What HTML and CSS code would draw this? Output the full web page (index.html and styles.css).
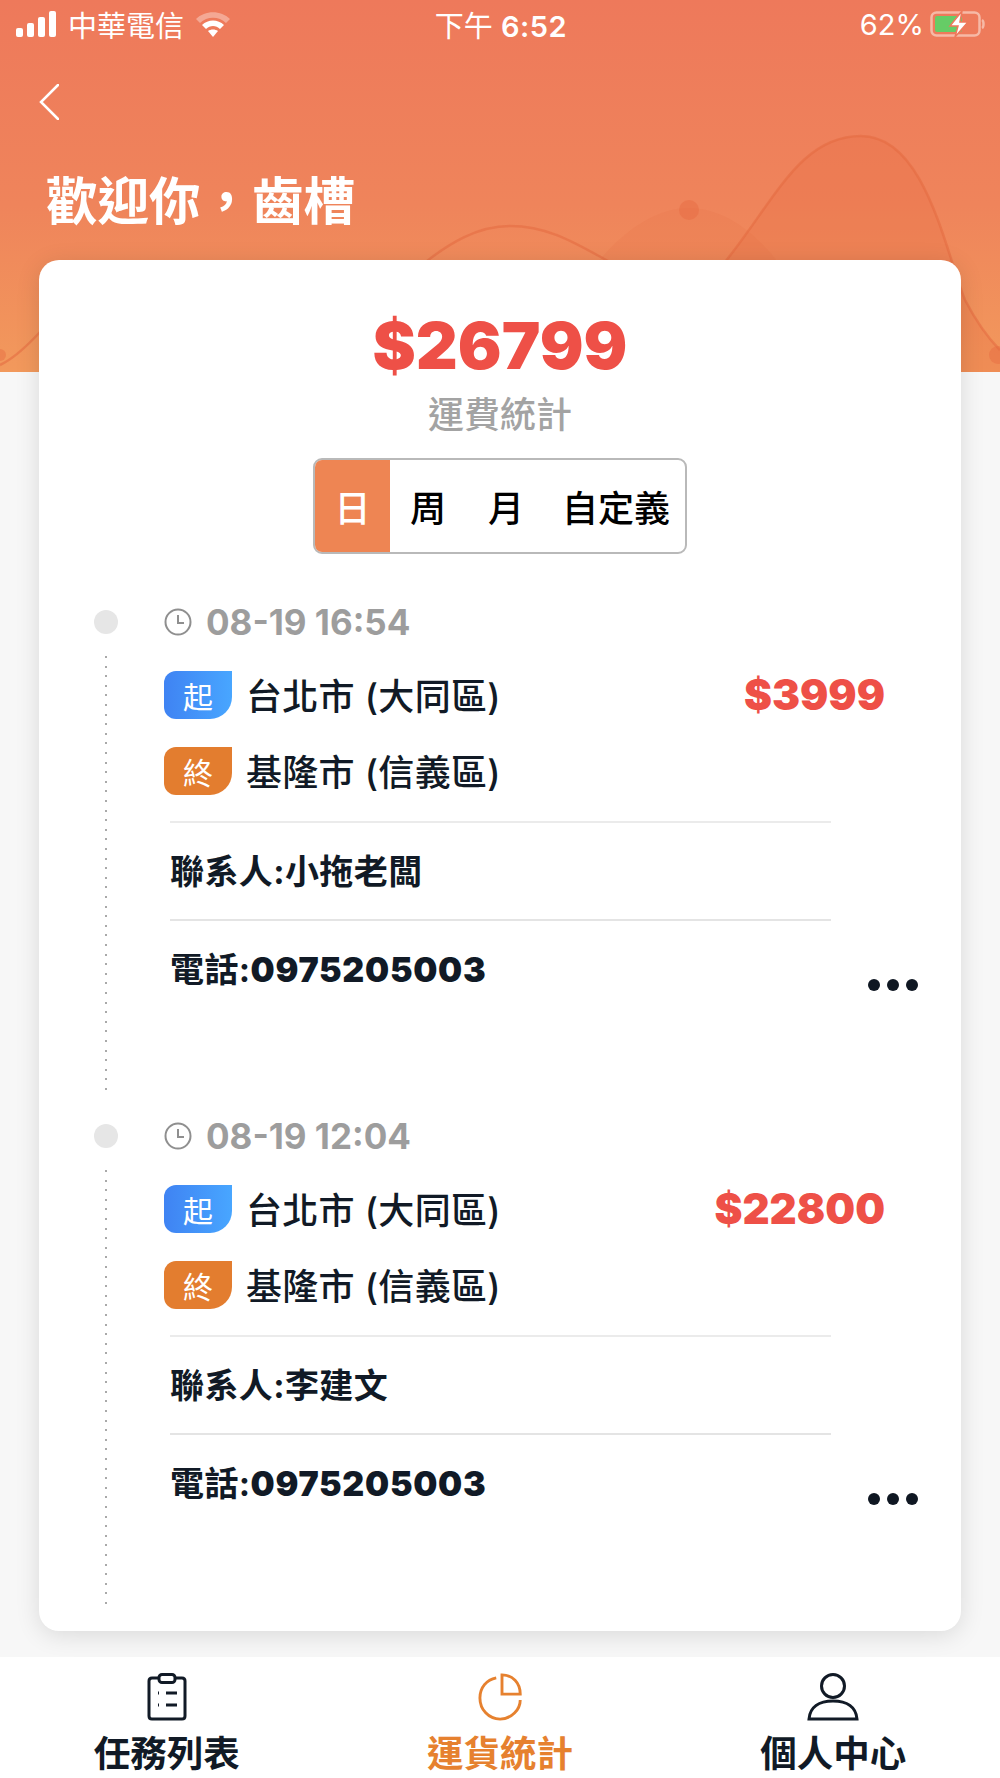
FILE: index.html
```html
<!DOCTYPE html>
<html lang="zh-Hant">
<head>
  <meta charset="UTF-8">
  <title>運貨統計</title>
  <meta name="viewport" content="width=device-width, initial-scale=1.0"/>
  <link rel="stylesheet" href="styles.css">
</head>
<body>

<header class="header">
  <svg class="hills" viewBox="0 0 1000 372" preserveAspectRatio="none" aria-hidden="true">
    <path class="hill-fill" d="M725 262C775 200 800 136 861 136C925 136 945 250 965 300C978 325 990 340 1000 350V372H725Z"/>
    <path class="hill-soft" d="M590 272C620 232 655 208 689 208C725 208 760 235 785 272V372H590Z"/>
    <circle class="hill-dot" cx="689" cy="210" r="10"/>
    <circle class="hill-dot" cx="998" cy="355" r="9"/>
    <circle class="hill-dot" cx="0" cy="355" r="6"/>
    <path class="hill-line" d="M0 365C15 358 28 345 40 332M410 275C450 240 480 226 510 226C555 226 585 250 625 270"/>
    <path class="hill-line" d="M725 262C775 200 800 136 861 136C925 136 945 250 965 300C978 325 990 340 1000 350"/>
  </svg>

  <div class="status-bar">
    <div class="status-left">
      <svg class="signal" viewBox="0 0 41 26"><rect x="0" y="17" width="7" height="9" rx="2"/><rect x="11" y="12" width="7" height="14" rx="2"/><rect x="22" y="6" width="7" height="20" rx="2"/><rect x="33" y="0" width="7" height="26" rx="2"/></svg>
      <span>中華電信</span>
      <svg class="wifi" viewBox="0 0 36 26"><path class="wifi-off" d="M1 8C10 -1 26 -1 35 8L31 12C24 5 12 5 5 12Z"/><path d="M7 14C13 8 23 8 29 14L25 18C21 14 15 14 11 18Z"/><path d="M13 20C16 18 20 18 23 20L18 26Z"/></svg>
    </div>
    <div class="status-time">下午 <b>6:52</b></div>
    <div class="status-right">
      <span>62%</span>
      <svg class="battery" viewBox="0 0 56 28"><rect class="battery-box" x="1.5" y="2.5" width="48" height="23" rx="5"/><path class="battery-box" d="M52 10C54 11 54 17 52 18"/><rect class="battery-level" x="5" y="6" width="27" height="16" rx="2"/><path class="battery-bolt" d="M32 1L20 16H28L25 27L38 12H30Z"/></svg>
    </div>
  </div>

  <a class="back" href="#">
    <svg viewBox="0 0 20 36"><path d="M19 1L2 18L19 35"/></svg>
  </a>
  <h1 class="welcome">歡迎你，齒槽</h1>
</header>

<main class="main">
  <section class="card">
    <div class="total">$26799</div>
    <div class="total-label">運費統計</div>
    <div class="tabs">
      <span class="tab active">日</span>
      <span class="tab">周</span>
      <span class="tab">月</span>
      <span class="tab">自定義</span>
    </div>

    <div class="timeline">
      <article class="item">
        <div class="rail"><span class="dot"></span><span class="dash"></span></div>
        <div class="content">
          <div class="date">
            <svg class="clock" viewBox="0 0 28 28"><circle cx="14" cy="14" r="12.5"/><path d="M14 7V15H20"/></svg>
            08-19 16:54
          </div>
          <div class="route">
            <span class="badge from">起</span>
            <span class="city">台北市 (大同區)</span>
            <span class="price">$3999</span>
          </div>
          <div class="route">
            <span class="badge to">終</span>
            <span class="city">基隆市 (信義區)</span>
          </div>
          <div class="info first">聯系人:小拖老闆</div>
          <div class="info-last">
            <div class="info">電話:<b>0975205003</b></div>
            <div class="more"><i></i><i></i><i></i></div>
          </div>
        </div>
      </article>

      <article class="item">
        <div class="rail"><span class="dot"></span><span class="dash"></span></div>
        <div class="content">
          <div class="date">
            <svg class="clock" viewBox="0 0 28 28"><circle cx="14" cy="14" r="12.5"/><path d="M14 7V15H20"/></svg>
            08-19 12:04
          </div>
          <div class="route">
            <span class="badge from">起</span>
            <span class="city">台北市 (大同區)</span>
            <span class="price">$22800</span>
          </div>
          <div class="route">
            <span class="badge to">終</span>
            <span class="city">基隆市 (信義區)</span>
          </div>
          <div class="info first">聯系人:李建文</div>
          <div class="info-last">
            <div class="info">電話:<b>0975205003</b></div>
            <div class="more"><i></i><i></i><i></i></div>
          </div>
        </div>
      </article>
    </div>
  </section>
</main>

<nav class="tabbar">
  <a class="tabbar-item" href="#">
    <svg viewBox="0 0 40 48"><path d="M11 5H5C3 5 2 6 2 8V43C2 45 3 46 5 46H35C37 46 38 45 38 43V8C38 6 37 5 35 5H29"/><rect x="12" y="1.5" width="16" height="8" rx="3"/><path d="M11 20H12M19 20H30M11 32H12M19 32H30"/></svg>
    <span>任務列表</span>
  </a>
  <a class="tabbar-item active" href="#">
    <svg viewBox="0 0 46 50"><path d="M19 5C9 7 2 15 2 26C2 38 11 48 23 48C35 48 44 38 44 28"/><path d="M25 2C36 2 44 10 44 22H25Z"/></svg>
    <span>運貨統計</span>
  </a>
  <a class="tabbar-item" href="#">
    <svg viewBox="0 0 52 48"><ellipse cx="26" cy="13" rx="11.5" ry="11.5"/><path d="M2 46C3 34 12 28 26 28C40 28 49 34 50 46Z"/></svg>
    <span>個人中心</span>
  </a>
</nav>

</body>
</html>
```

FILE: styles.css
```css
* {
  box-sizing: border-box;
}

html, body {
  margin: 0;
  height: 1778px;
  overflow: hidden;
}

body {
  font-family: Inter, "Noto Sans CJK TC", sans-serif;
  background: #f7f7f7;
  color: #111a26;
}

.header {
  position: relative;
  height: 372px;
  padding-top: 3px;
  background: linear-gradient(180deg, #ee795b 0%, #ef845b 55%, #f2995c 100%);
  color: white;
  overflow: hidden;
}

.hills {
  position: absolute;
  left: 0;
  top: 0;
  width: 100%;
  height: 100%;
}

.hill-fill {
  fill: #e5673f;
  opacity: 0.24;
}

.hill-soft {
  fill: #e5673f;
  opacity: 0.14;
}

.hill-dot {
  fill: #e5673f;
  opacity: 0.4;
}

.hill-line {
  fill: none;
  stroke: #e4693f;
  stroke-width: 2.5;
  opacity: 0.55;
}

.status-bar {
  position: relative;
  display: grid;
  grid-template-columns: 1fr auto 1fr;
  align-items: center;
  height: 40px;
  padding: 0 14px 0 16px;
  font-size: 29px;
}

.status-left {
  display: flex;
  align-items: center;
  gap: 11px;
}

.signal {
  width: 41px;
  height: 26px;
  fill: white;
}

.wifi {
  width: 36px;
  height: 26px;
  fill: white;
}

.wifi-off {
  opacity: 0.35;
}

.status-time b {
  font-weight: 600;
  letter-spacing: 0.5px;
}

.status-right {
  display: flex;
  align-items: center;
  justify-content: flex-end;
  gap: 6px;
}

.battery {
  width: 56px;
  height: 28px;
}

.battery-box {
  fill: none;
  stroke: #f6b9a6;
  stroke-width: 2.5;
}

.battery-level {
  fill: #66cc66;
}

.battery-bolt {
  fill: white;
  stroke: #ee795b;
  stroke-width: 1.5;
}

.back {
  position: relative;
  display: block;
  width: 20px;
  height: 36px;
  margin: 41px 0 0 39px;
}

.back svg {
  display: block;
  width: 20px;
  height: 36px;
  fill: none;
  stroke: white;
  stroke-width: 2.5;
  stroke-linecap: round;
}

.welcome {
  position: relative;
  margin: 46px 0 0 46px;
  font-size: 51.5px;
  line-height: 70px;
  font-weight: 700;
}

.main {
  position: relative;
  height: 1397px;
  margin-top: -112px;
  padding: 0 39px;
}

.card {
  height: 1371px;
  padding: 51px 43px 0 55px;
  background: white;
  border-radius: 20px;
  box-shadow: 0 4px 24px rgba(0,0,0,0.12);
}

.total {
  margin-left: -12px;
  font-size: 65px;
  line-height: 70px;
  font-weight: 900;
  color: #ee5047;
  text-align: center;
}

.total-label {
  margin: 9px 0 0 -12px;
  font-size: 36px;
  line-height: 50px;
  font-weight: 500;
  color: #a3a3a3;
  text-align: center;
}

.tabs {
  display: flex;
  width: 374px;
  height: 96px;
  margin: 18px 0 0 219px;
  border: 2px solid #b9b9b9;
  border-radius: 9px;
  overflow: hidden;
  background: white;
}

.tab {
  display: flex;
  align-items: center;
  flex: none;
  padding: 0 20px;
  font-size: 36px;
  font-weight: 500;
  color: #000;
}

.tab.active {
  padding: 0 19.5px;
  background: #ee8553;
  color: white;
}

.tab:nth-child(3) {
  margin-left: 2px;
}

.tab:last-child {
  padding-left: 18px;
}

.timeline {
  margin-top: 50px;
}

.item {
  display: flex;
  gap: 46px;
  height: 514px;
}

.rail {
  display: flex;
  flex-direction: column;
  align-items: center;
  width: 24px;
  flex: none;
}

.dot {
  width: 24px;
  height: 24px;
  margin-top: 6px;
  border-radius: 50%;
  background: #e6e6e6;
}

.dash {
  width: 2px;
  height: 440px;
  margin-top: 22px;
  background: repeating-linear-gradient(180deg, #a9a9a9 0, #a9a9a9 2px, transparent 2px, transparent 9.6px);
}

.content {
  flex: 1;
}

.date {
  display: flex;
  align-items: center;
  gap: 14px;
  height: 36px;
  font-size: 35px;
  font-weight: 700;
  color: #9d9d9d;
}

.clock {
  width: 28px;
  height: 28px;
  flex: none;
  fill: none;
  stroke: #8f8f8f;
  stroke-width: 2;
}

.route {
  display: flex;
  align-items: center;
  height: 48px;
  margin-top: 28px;
}

.date + .route {
  margin-top: 31px;
}

.badge {
  display: flex;
  align-items: center;
  justify-content: center;
  width: 68px;
  height: 48px;
  border-radius: 12px 0 22px 12px;
  font-size: 30px;
  color: white;
}

.badge.from {
  background: linear-gradient(90deg, #3f83f3, #48a6ff);
}

.badge.to {
  background: #e37d2f;
}

.city {
  margin-left: 14px;
  padding-bottom: 2px;
  font-size: 36px;
  font-weight: 500;
  letter-spacing: 0.3px;
}

.price {
  margin: 0 33px 0 auto;
  padding-bottom: 2px;
  font-size: 42px;
  font-weight: 900;
  color: #ee5047;
}

.info {
  margin-left: 6px;
  font-size: 34px;
  font-weight: 700;
  letter-spacing: 0.4px;
}

.info b {
  font-weight: 900;
  font-size: 34px;
  letter-spacing: 0.7px;
}

.info.first {
  width: 661px;
  height: 100px;
  margin-top: 26px;
  padding-bottom: 4px;
  display: flex;
  align-items: center;
  border-top: 2px solid #ebebeb;
  border-bottom: 2px solid #e4e4e4;
}

.info-last {
  display: flex;
  justify-content: space-between;
  padding-top: 22px;
}

.more {
  display: flex;
  gap: 7px;
  margin-top: 36px;
}

.more i {
  width: 12px;
  height: 12px;
  border-radius: 50%;
  background: #0f1722;
}

.tabbar {
  position: relative;
  display: grid;
  grid-template-columns: repeat(3, 1fr);
  height: 121px;
  background: white;
}

.tabbar-item {
  display: flex;
  flex-direction: column;
  align-items: center;
  padding-top: 16px;
  color: #111a26;
  text-decoration: none;
  font-size: 36.5px;
  line-height: 50px;
  font-weight: 700;
}

.tabbar-item svg {
  height: 48px;
  fill: none;
  stroke: #111a26;
  stroke-width: 3;
  margin-bottom: 8px;
}

.tabbar-item.active {
  color: #e6812f;
}

.tabbar-item.active svg {
  stroke: #e6812f;
}
```
